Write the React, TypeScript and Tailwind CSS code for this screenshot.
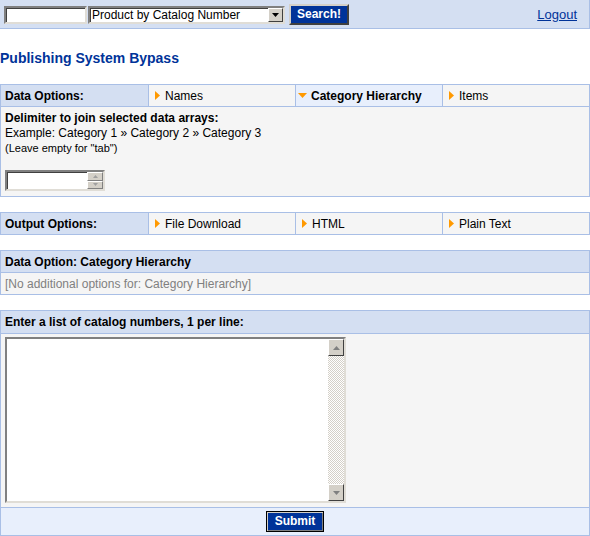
import React from 'react';

const inset =
  'border-2 border-t-[#808080] border-l-[#808080] border-b-[#e0ddd6] border-r-[#e0ddd6] shadow-[inset_1px_1px_0_#404040]';

function RightArrow() {
  return (
    <svg width="5" height="9" viewBox="0 0 5 9" className="shrink-0">
      <path d="M0 0 L5 4.5 L0 9 Z" fill="#ff9900" />
    </svg>
  );
}

function DownArrow() {
  return (
    <svg width="9" height="5" viewBox="0 0 9 5" className="shrink-0">
      <path d="M0 0 L9 0 L4.5 5 Z" fill="#ff9900" />
    </svg>
  );
}

function ScrollBtn({ up }: { up?: boolean }) {
  return (
    <div className="w-[16px] h-[17px] bg-[#d4d0c8] border border-t-white border-l-white border-b-[#404040] border-r-[#404040] flex items-center justify-center">
      <svg width="7" height="4" viewBox="0 0 7 4">
        <path d={up ? 'M0 4 L3.5 0 L7 4 Z' : 'M0 0 L7 0 L3.5 4 Z'} fill="#808080" />
      </svg>
    </div>
  );
}

interface OptionRowProps {
  label: string;
  items: { name: string; active?: boolean }[];
}

function OptionRow({ label, items }: OptionRowProps) {
  return (
    <div className="border border-[#a9bfe6] grid grid-cols-[147px_147px_147px_1fr] h-[23px]">
      <div className="bg-[#d4dff2] font-bold px-[4px] pt-[2px] flex items-center">{label}</div>
      {items.map((it) => (
        <div
          key={it.name}
          className={`border-l border-[#a9bfe6] flex items-center ${
            it.active ? 'bg-[#e8effc] font-bold pl-[2px] gap-[4px]' : 'bg-[#f5f5f5] pl-[6px] gap-[5px]'
          }`}
        >
          {it.active ? <DownArrow /> : <RightArrow />}
          <span className="pt-[2px]">{it.name}</span>
        </div>
      ))}
    </div>
  );
}

export default function App() {
  return (
    <div className="w-[590px] h-[536px] bg-white text-black text-[12px] leading-[15px] font-['Liberation_Sans',Arial,sans-serif] overflow-hidden">
      {/* top bar */}
      <div className="h-[29px] bg-[#d4dff2] border-b border-r border-[#a9bfe6] flex items-center pl-[4px] pr-[12px]">
        <div className={`w-[83px] h-[18px] bg-white mt-[1px] ${inset}`} />
        <div className={`w-[197px] h-[18px] bg-white mt-[1px] ml-[1px] flex items-center ${inset}`}>
          <span className="flex-1 pl-[2px] leading-[14px]">Product by Catalog Number</span>
          <div className="w-[15px] h-[14px] bg-[#d4d0c8] border border-t-white border-l-white border-b-[#404040] border-r-[#404040] flex items-center justify-center">
            <svg width="7" height="4" viewBox="0 0 7 4">
              <path d="M0 0 L7 0 L3.5 4 Z" fill="#000" />
            </svg>
          </div>
        </div>
        <button className="ml-[4px] w-[60px] h-[21px] bg-[#003399] text-white font-bold border-2 border-t-[#d4d0c8] border-l-[#d4d0c8] border-b-[#404040] border-r-[#404040] leading-[15px]">
          Search!
        </button>
        <div className="flex-1" />
        <a href="#" className="text-[#003399] underline text-[13px] pt-[1px]">
          Logout
        </a>
      </div>

      <h1 className="mt-[21px] mb-[18px] text-[14px] leading-[16px] font-bold text-[#003399]">
        Publishing System Bypass
      </h1>

      {/* data options */}
      <div>
        <OptionRow
          label="Data Options:"
          items={[{ name: 'Names' }, { name: 'Category Hierarchy', active: true }, { name: 'Items' }]}
        />
        <div className="border border-t-0 border-[#a9bfe6] bg-[#f5f5f5] h-[90px] px-[4px] pt-[4px]">
          <div className="font-bold">Delimiter to join selected data arrays:</div>
          <div>Example: Category 1 » Category 2 » Category 3</div>
          <div className="text-[11px]">(Leave empty for "tab")</div>
          <div className={`mt-[14px] w-[100px] h-[21px] bg-white flex ${inset}`}>
            <div className="flex-1" />
            <div className="w-[16px] flex flex-col">
              <div className="flex-1 bg-[#d4d0c8] border border-t-white border-l-white border-b-[#808080] border-r-[#808080] flex items-center justify-center">
                <svg width="5" height="3" viewBox="0 0 5 3">
                  <path d="M0 3 L2.5 0 L5 3 Z" fill="#a0a0a0" />
                </svg>
              </div>
              <div className="flex-1 bg-[#d4d0c8] border border-t-white border-l-white border-b-[#808080] border-r-[#808080] flex items-center justify-center">
                <svg width="5" height="3" viewBox="0 0 5 3">
                  <path d="M0 0 L5 0 L2.5 3 Z" fill="#a0a0a0" />
                </svg>
              </div>
            </div>
          </div>
        </div>
      </div>

      {/* output options */}
      <div className="mt-[15px]">
        <OptionRow
          label="Output Options:"
          items={[{ name: 'File Download' }, { name: 'HTML' }, { name: 'Plain Text' }]}
        />
      </div>

      {/* data option detail */}
      <div className="mt-[15px] border border-[#a9bfe6]">
        <div className="h-[21px] bg-[#d4dff2] font-bold px-[4px] pt-[2px] flex items-center">
          Data Option: Category Hierarchy
        </div>
        <div className="h-[22px] border-t border-[#a9bfe6] bg-[#f5f5f5] text-[#808080] px-[4px] pt-[1px] flex items-center">
          [No additional options for: Category Hierarchy]
        </div>
      </div>

      {/* catalog numbers */}
      <div className="mt-[15px] border border-[#a9bfe6]">
        <div className="h-[22px] bg-[#d4dff2] font-bold px-[4px] flex items-center">
          Enter a list of catalog numbers, 1 per line:
        </div>
        <div className="h-[174px] border-t border-[#a9bfe6] bg-[#f5f5f5] px-[4px] pt-[3px]">
          <div className={`w-[341px] h-[166px] bg-white flex ${inset}`}>
            <textarea className="flex-1 resize-none outline-none bg-white p-[2px]" />
            <div className="w-[16px] flex flex-col bg-[repeating-conic-gradient(#d4d0c8_0_25%,#ffffff_0_50%)] bg-[length:2px_2px]">
              <ScrollBtn up />
              <div className="flex-1" />
              <ScrollBtn />
            </div>
          </div>
        </div>
        <div className="h-[28px] border-t border-[#a9bfe6] bg-[#e8effc] flex items-center justify-center">
          <button className="w-[58px] h-[21px] bg-[#003399] text-white font-bold border border-black shadow-[inset_1px_1px_0_#d4d0c8,inset_-1px_-1px_0_#808080] leading-[15px]">
            Submit
          </button>
        </div>
      </div>
    </div>
  );
}
